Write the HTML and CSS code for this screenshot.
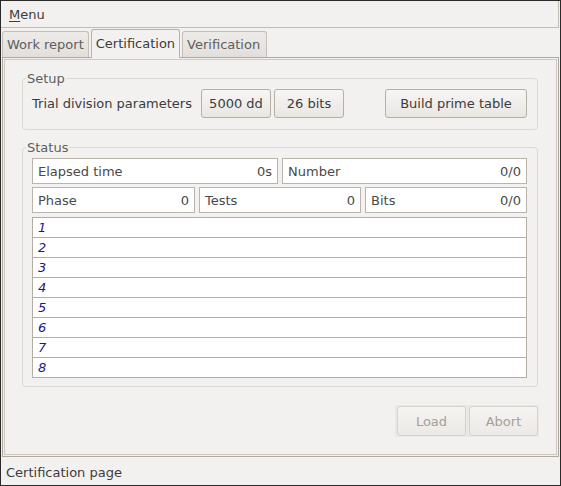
FILE: index.html
```html
<!DOCTYPE html>
<html>
<head>
<meta charset="utf-8">
<link rel="stylesheet" href="styles.css">
</head>
<body>
<div class="window">
  <div class="menubar"><span class="menu"><u>M</u>enu</span></div>
  <div class="tabs">
    <div class="tab">Work report</div>
    <div class="tab active">Certification</div>
    <div class="tab last">Verification</div>
  </div>
  <div class="panel">
    <fieldset class="group setup">
      <legend>Setup</legend>
      <div class="setup-row">
        <span class="label">Trial division parameters</span>
        <button class="btn small">5000 dd</button>
        <button class="btn small">26 bits</button>
        <span class="spacer"></span>
        <button class="btn wide">Build prime table</button>
      </div>
    </fieldset>
    <fieldset class="group status">
      <legend>Status</legend>
      <div class="info-row two">
        <div class="info"><span>Elapsed time</span><span>0s</span></div>
        <div class="info"><span>Number</span><span>0/0</span></div>
      </div>
      <div class="info-row three">
        <div class="info"><span>Phase</span><span>0</span></div>
        <div class="info"><span>Tests</span><span>0</span></div>
        <div class="info"><span>Bits</span><span>0/0</span></div>
      </div>
      <div class="list">
        <div class="row">1</div>
        <div class="row">2</div>
        <div class="row">3</div>
        <div class="row">4</div>
        <div class="row">5</div>
        <div class="row">6</div>
        <div class="row">7</div>
        <div class="row">8</div>
      </div>
    </fieldset>
    <div class="actions">
      <div class="btn-box">
        <button class="btn disabled">Load</button>
        <button class="btn disabled">Abort</button>
      </div>
    </div>
  </div>
  <div class="statusbar">Certification page</div>
</div>
</body>
</html>
```

FILE: styles.css
```css
html, body {
  margin: 0;
  padding: 0;
  background: #f2f1f0;
}
body {
  font-family: "DejaVu Sans", sans-serif;
  font-size: 13px;
  color: #3c3c3c;
}
.window {
  width: 561px;
  height: 486px;
  box-sizing: border-box;
  border: 1px solid #2a2a2a;
  background: #f2f1f0;
  display: flex;
  flex-direction: column;
}
.menubar {
  height: 26px;
  border-bottom: 1px solid #c2bcb4;
  border-right: 1px solid #c2bcb4;
  margin-right: 1px;
  display: flex;
  align-items: center;
  padding-left: 8px;
  box-sizing: content-box;
}
.menu u {
  text-decoration-thickness: 1px;
  text-underline-offset: 2px;
}
.tabs {
  display: flex;
  align-items: flex-end;
  gap: 2px;
  height: 29px;
  padding-left: 1px;
}
.tab {
  height: 25px;
  line-height: 25px;
  padding: 0 4px;
  border: 1px solid #c4beb6;
  border-bottom: none;
  border-radius: 3px 3px 0 0;
  background: linear-gradient(#edebe8, #e2dfdb);
  color: #5e5e5e;
}
.tab.last {
  padding-right: 6px;
}
.tab.active {
  height: 28px;
  line-height: 27px;
  background: #f2f1f0;
  color: #3c3c3c;
  border-color: #b9b2a9;
  position: relative;
  z-index: 1;
  margin-bottom: -1px;
}
.panel {
  flex: 1;
  margin: 0 1px 0 1px;
  border: 1px solid #b0a9a0;
  box-shadow: inset 0 0 0 1px #f2f1f0, inset 0 0 0 2px #cdc8c1;
  padding: 13px 20px 0 19px;
  display: flex;
  flex-direction: column;
}
.group {
  margin: 0;
  border: 1px solid #dcd8d2;
  border-radius: 4px;
  min-inline-size: 0;
}
.group legend {
  padding: 0 1px;
  margin-left: -6px;
  color: #5e5e5e;
  line-height: 15px;
}
.setup {
  padding: 3px 10px 11px 9px;
}
.setup-row {
  display: flex;
  align-items: center;
  gap: 3px;
}
.label {
  margin-right: 6px;
}
.spacer {
  flex: 1;
}
.btn {
  font-family: "DejaVu Sans", sans-serif;
  font-size: 13px;
  color: #3c3c3c;
  height: 29px;
  border: 1px solid #b7b0a6;
  border-radius: 3px;
  background: linear-gradient(#f7f6f5, #e9e6e2);
  padding: 0;
  margin: 0;
}
.btn.small {
  width: 70px;
}
.btn.wide {
  width: 142px;
}
.status {
  margin-top: 10px;
  padding: 3px 10px 8px 9px;
}
.info-row {
  display: grid;
  gap: 4px;
  margin-bottom: 3px;
}
.info-row.three {
  margin-bottom: 4px;
}
.info-row.two {
  grid-template-columns: 246px 1fr;
}
.info-row.three {
  grid-template-columns: 163px 162px 1fr;
}
.info {
  height: 24px;
  border: 1px solid #bab4ab;
  background: #ffffff;
  display: flex;
  justify-content: space-between;
  align-items: center;
  padding: 0 5px 0 5px;
  color: #4a4a4a;
}
.list {
  border: 1px solid #b4ada4;
  background: #ffffff;
}
.row {
  height: 19px;
  line-height: 19px;
  border-bottom: 1px solid #b4ada4;
  padding-left: 5px;
  font-style: italic;
  color: #18188c;
}
.row:last-child {
  border-bottom: none;
}
.actions {
  display: flex;
  justify-content: flex-end;
  margin-top: 18px;
  margin-right: -1px;
}
.btn-box {
  display: flex;
  gap: 3px;
  padding: 1px 1px 1px 2px;
  background: #ebe9e6;
}
.btn.disabled {
  width: 69px;
  height: 30px;
  color: #a49f98;
  border-color: #d6d1ca;
  background: linear-gradient(#f5f4f2, #ece9e6);
}
.statusbar {
  height: 27px;
  line-height: 27px;
  padding-left: 5px;
  padding-top: 1px;
  box-sizing: border-box;
  margin-top: 1px;
}
```
